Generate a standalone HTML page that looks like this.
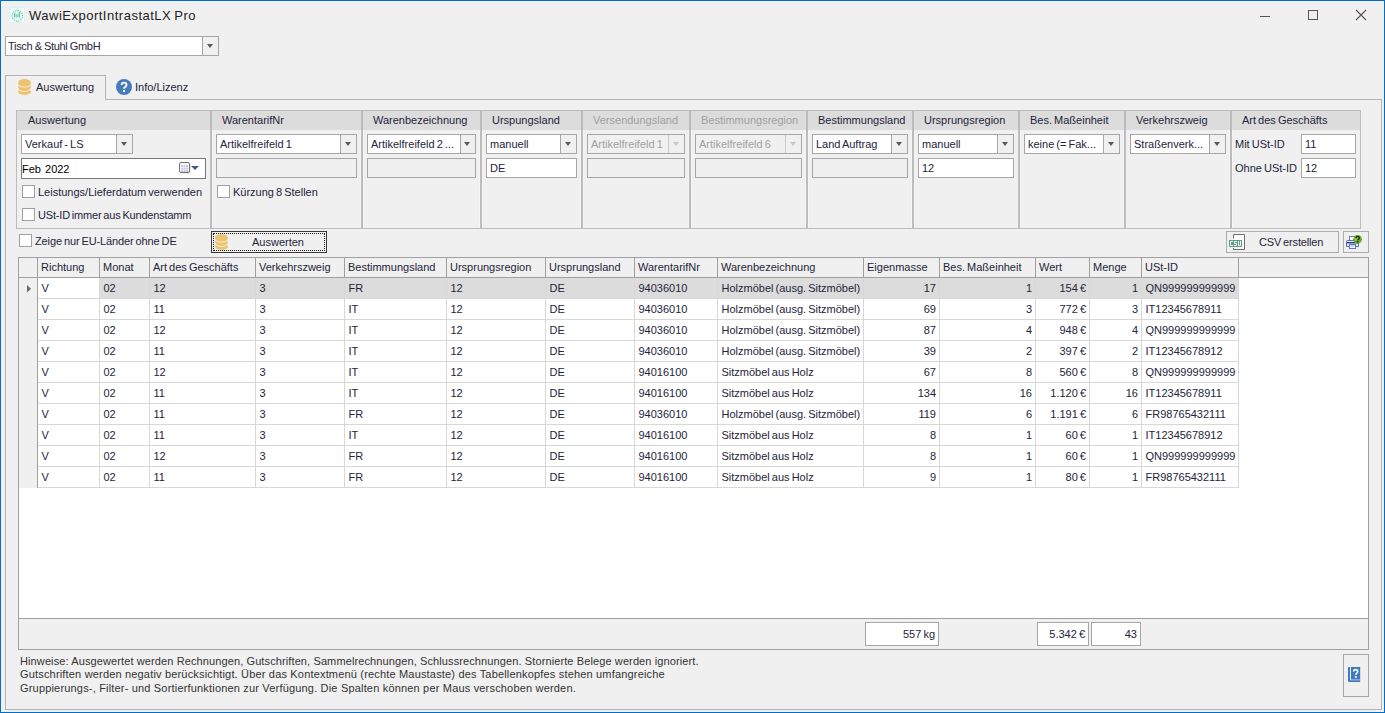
<!DOCTYPE html><html><head><meta charset="utf-8"><style>
html,body{margin:0;padding:0;}
body{width:1385px;height:713px;overflow:hidden;position:relative;background:#f0f0f0;font-family:"Liberation Sans", sans-serif;font-size:11px;color:#24243a;word-spacing:-1px;}
div{box-sizing:content-box;}
</style></head><body>
<div style="position:absolute;left:0px;top:0px;width:1383px;height:711px;border:1px solid #006dc9;"></div>
<svg style="position:absolute;left:9px;top:7px" width="16" height="16" viewBox="0 0 16 16">
<rect x="0.5" y="0.5" width="15" height="15" rx="1" fill="#f2fdfb" stroke="#d6f3ec"/>
<g fill="#5ccbb3">
<rect x="5" y="6" width="1.4" height="4.5"/><rect x="6.8" y="7.1" width="2.3" height="3.4" fill="#8adcc9"/><rect x="9.6" y="5" width="1.4" height="5.5"/>
<circle cx="9.22" cy="3.58" r="0.75"/><circle cx="11.39" cy="4.50" r="0.75"/><circle cx="12.95" cy="6.27" r="0.75"/><circle cx="13.59" cy="8.54" r="0.75"/><circle cx="13.18" cy="10.86" r="0.75"/><circle cx="11.81" cy="12.77" r="0.75"/><circle cx="9.74" cy="13.90" r="0.75"/><circle cx="7.38" cy="14.02" r="0.75"/><circle cx="5.21" cy="13.10" r="0.75"/><circle cx="3.65" cy="11.33" r="0.75"/><circle cx="3.01" cy="9.06" r="0.75"/><circle cx="3.42" cy="6.74" r="0.75"/><circle cx="4.79" cy="4.83" r="0.75"/><circle cx="6.86" cy="3.70" r="0.75"/>
</g></svg>
<div style="position:absolute;left:29px;top:8px;font-size:13px;line-height:15px;letter-spacing:0.5px;color:#222;white-space:nowrap">WawiExportIntrastatLX Pro</div>
<div style="position:absolute;left:1260px;top:16px;width:10px;height:1px;background:#555;"></div>
<div style="position:absolute;left:1308px;top:10px;width:8px;height:8px;border:1px solid #555;"></div>
<svg style="position:absolute;left:1355px;top:9px" width="12" height="12" viewBox="0 0 12 12"><path d="M1 1L11 11M11 1L1 11" stroke="#555" stroke-width="1.1"/></svg>
<div style="position:absolute;left:5px;top:36px;width:212px;height:18px;border:1px solid #a6a6a6;background:#fff;"></div>
<div style="position:absolute;left:202px;top:37px;width:1px;height:18px;background:#a6a6a6;"></div>
<div style="position:absolute;left:203px;top:37px;width:15px;height:18px;background:#f0f0f0;"></div>
<div style="position:absolute;left:8px;top:40px;line-height:13px;font-size:11px;color:#24243a;white-space:nowrap;letter-spacing:-0.3px;word-spacing:-0.5px;">Tisch &amp; Stuhl GmbH</div>
<div style="position:absolute;left:207px;top:44px;width:0;height:0;border-left:3.5px solid transparent;border-right:3.5px solid transparent;border-top:4px solid #5a5a5a;"></div>
<div style="position:absolute;left:5px;top:75px;width:99px;height:24px;border:1px solid #b4b4b4;border-bottom:none;background:#f0f0f0;"></div>
<div style="position:absolute;left:5px;top:99px;width:1375px;height:609px;border:1px solid #b4b4b4;"></div>
<div style="position:absolute;left:6px;top:99px;width:99px;height:1px;background:#f0f0f0;"></div>
<svg style="position:absolute;left:18px;top:79px" width="13" height="17" viewBox="0 0 14 17" preserveAspectRatio="none">
<ellipse cx="7" cy="12.5" rx="7" ry="3.5" fill="#ecc36f"/>
<ellipse cx="7" cy="8" rx="7" ry="3.5" fill="#ecc36f"/>
<path d="M0 10.5 Q7 14.5 14 10.5" stroke="#f6efe0" stroke-width="1" fill="none"/>
<ellipse cx="7" cy="4" rx="7" ry="4" fill="#ecc36f"/>
<path d="M0 6.3 Q7 10 14 6.3" stroke="#f6efe0" stroke-width="1" fill="none"/>
</svg>
<div style="position:absolute;left:36px;top:81px;line-height:13px;font-size:11px;color:#24243a;white-space:nowrap;">Auswertung</div>
<svg style="position:absolute;left:116px;top:79px" width="16" height="16" viewBox="0 0 16 16">
<circle cx="8" cy="8" r="8" fill="#447cbe"/>
<path d="M5.6 6.1 Q5.6 3.6 8 3.6 Q10.5 3.6 10.5 5.9 Q10.5 7.3 9 8.1 Q8.1 8.6 8.1 9.8" stroke="#fff" stroke-width="1.9" fill="none"/>
<rect x="7.1" y="11" width="2" height="2" fill="#fff"/>
</svg>
<div style="position:absolute;left:135px;top:81px;line-height:13px;font-size:11px;color:#24243a;white-space:nowrap;">Info/Lizenz</div>
<div style="position:absolute;left:16px;top:110px;width:1343px;height:117px;border:1px solid #bcbcbc;"></div>
<div style="position:absolute;left:17px;top:111px;width:1343px;height:19px;background:#dcdcdc;"></div>
<div style="position:absolute;left:210px;top:111px;width:2px;height:117px;background:#bcbcbc;"></div>
<div style="position:absolute;left:209px;top:130px;width:1px;height:98px;background:#f5f5f5;"></div>
<div style="position:absolute;left:212px;top:130px;width:1px;height:98px;background:#f5f5f5;"></div>
<div style="position:absolute;left:361px;top:111px;width:2px;height:117px;background:#bcbcbc;"></div>
<div style="position:absolute;left:360px;top:130px;width:1px;height:98px;background:#f5f5f5;"></div>
<div style="position:absolute;left:363px;top:130px;width:1px;height:98px;background:#f5f5f5;"></div>
<div style="position:absolute;left:480px;top:111px;width:2px;height:117px;background:#bcbcbc;"></div>
<div style="position:absolute;left:479px;top:130px;width:1px;height:98px;background:#f5f5f5;"></div>
<div style="position:absolute;left:482px;top:130px;width:1px;height:98px;background:#f5f5f5;"></div>
<div style="position:absolute;left:581px;top:111px;width:2px;height:117px;background:#bcbcbc;"></div>
<div style="position:absolute;left:580px;top:130px;width:1px;height:98px;background:#f5f5f5;"></div>
<div style="position:absolute;left:583px;top:130px;width:1px;height:98px;background:#f5f5f5;"></div>
<div style="position:absolute;left:689px;top:111px;width:2px;height:117px;background:#bcbcbc;"></div>
<div style="position:absolute;left:688px;top:130px;width:1px;height:98px;background:#f5f5f5;"></div>
<div style="position:absolute;left:691px;top:130px;width:1px;height:98px;background:#f5f5f5;"></div>
<div style="position:absolute;left:806px;top:111px;width:2px;height:117px;background:#bcbcbc;"></div>
<div style="position:absolute;left:805px;top:130px;width:1px;height:98px;background:#f5f5f5;"></div>
<div style="position:absolute;left:808px;top:130px;width:1px;height:98px;background:#f5f5f5;"></div>
<div style="position:absolute;left:912px;top:111px;width:2px;height:117px;background:#bcbcbc;"></div>
<div style="position:absolute;left:911px;top:130px;width:1px;height:98px;background:#f5f5f5;"></div>
<div style="position:absolute;left:914px;top:130px;width:1px;height:98px;background:#f5f5f5;"></div>
<div style="position:absolute;left:1018px;top:111px;width:2px;height:117px;background:#bcbcbc;"></div>
<div style="position:absolute;left:1017px;top:130px;width:1px;height:98px;background:#f5f5f5;"></div>
<div style="position:absolute;left:1020px;top:130px;width:1px;height:98px;background:#f5f5f5;"></div>
<div style="position:absolute;left:1124px;top:111px;width:2px;height:117px;background:#bcbcbc;"></div>
<div style="position:absolute;left:1123px;top:130px;width:1px;height:98px;background:#f5f5f5;"></div>
<div style="position:absolute;left:1126px;top:130px;width:1px;height:98px;background:#f5f5f5;"></div>
<div style="position:absolute;left:1230px;top:111px;width:2px;height:117px;background:#bcbcbc;"></div>
<div style="position:absolute;left:1229px;top:130px;width:1px;height:98px;background:#f5f5f5;"></div>
<div style="position:absolute;left:1232px;top:130px;width:1px;height:98px;background:#f5f5f5;"></div>
<div style="position:absolute;left:28px;top:114px;line-height:13px;font-size:11px;color:#24243a;white-space:nowrap;">Auswertung</div>
<div style="position:absolute;left:222px;top:114px;line-height:13px;font-size:11px;color:#24243a;white-space:nowrap;">WarentarifNr</div>
<div style="position:absolute;left:373px;top:114px;line-height:13px;font-size:11px;color:#24243a;white-space:nowrap;">Warenbezeichnung</div>
<div style="position:absolute;left:492px;top:114px;line-height:13px;font-size:11px;color:#24243a;white-space:nowrap;">Urspungsland</div>
<div style="position:absolute;left:593px;top:114px;line-height:13px;font-size:11px;color:#a0a0a0;white-space:nowrap;">Versendungsland</div>
<div style="position:absolute;left:701px;top:114px;line-height:13px;font-size:11px;color:#a0a0a0;white-space:nowrap;">Bestimmungsregion</div>
<div style="position:absolute;left:818px;top:114px;line-height:13px;font-size:11px;color:#24243a;white-space:nowrap;">Bestimmungsland</div>
<div style="position:absolute;left:924px;top:114px;line-height:13px;font-size:11px;color:#24243a;white-space:nowrap;">Ursprungsregion</div>
<div style="position:absolute;left:1030px;top:114px;line-height:13px;font-size:11px;color:#24243a;white-space:nowrap;">Bes. Maßeinheit</div>
<div style="position:absolute;left:1136px;top:114px;line-height:13px;font-size:11px;color:#24243a;white-space:nowrap;">Verkehrszweig</div>
<div style="position:absolute;left:1242px;top:114px;line-height:13px;font-size:11px;color:#24243a;white-space:nowrap;">Art des Geschäfts</div>
<div style="position:absolute;left:21px;top:134px;width:110px;height:18px;border:1px solid #a6a6a6;background:#fff;"></div>
<div style="position:absolute;left:116px;top:135px;width:1px;height:18px;background:#a6a6a6;"></div>
<div style="position:absolute;left:117px;top:135px;width:15px;height:18px;background:#f0f0f0;"></div>
<div style="position:absolute;left:25px;top:138px;line-height:13px;font-size:11px;color:#24243a;white-space:nowrap;">Verkauf - LS</div>
<div style="position:absolute;left:121px;top:142px;width:0;height:0;border-left:3.5px solid transparent;border-right:3.5px solid transparent;border-top:4px solid #5a5a5a;"></div>
<div style="position:absolute;left:21px;top:158px;width:183px;height:19px;border:1px solid #7a7a7a;background:#fff;"></div>
<div style="position:absolute;left:22px;top:163px;line-height:13px;font-size:11px;color:#000;white-space:nowrap;word-spacing:1px;">Feb 2022</div>
<svg style="position:absolute;left:179px;top:162px" width="12" height="12" viewBox="0 0 12 12">
<rect x="1.5" y="1.5" width="10" height="10" rx="1.5" fill="#d8d8d8"/>
<rect x="0.5" y="0.5" width="10" height="10" rx="1.5" fill="#fcfcfd" stroke="#7a6d68"/>
<g fill="#c3cbdc"><rect x="2" y="3" width="2" height="2"/><rect x="4.5" y="3" width="2" height="2"/><rect x="7" y="3" width="2" height="2"/>
<rect x="2" y="5.5" width="2" height="2"/><rect x="4.5" y="5.5" width="2" height="2"/><rect x="7" y="5.5" width="2" height="2"/>
<rect x="2" y="8" width="2" height="2"/><rect x="4.5" y="8" width="2" height="2"/><rect x="7" y="8" width="2" height="2"/></g>
</svg>
<div style="position:absolute;left:191px;top:166px;width:0;height:0;border-left:4.0px solid transparent;border-right:4.0px solid transparent;border-top:4px solid #3b5a8a;"></div>
<div style="position:absolute;left:22px;top:185px;width:11px;height:11px;border:1px solid #a0a0a0;background:#fff;"></div>
<div style="position:absolute;left:38px;top:186px;line-height:13px;font-size:11px;color:#24243a;white-space:nowrap;">Leistungs/Lieferdatum verwenden</div>
<div style="position:absolute;left:22px;top:208px;width:11px;height:11px;border:1px solid #a0a0a0;background:#fff;"></div>
<div style="position:absolute;left:38px;top:209px;line-height:13px;font-size:11px;color:#24243a;white-space:nowrap;letter-spacing:-0.18px;">USt-ID immer aus Kundenstamm</div>
<div style="position:absolute;left:216px;top:134px;width:139px;height:18px;border:1px solid #a6a6a6;background:#fff;"></div>
<div style="position:absolute;left:340px;top:135px;width:1px;height:18px;background:#a6a6a6;"></div>
<div style="position:absolute;left:341px;top:135px;width:15px;height:18px;background:#f0f0f0;"></div>
<div style="position:absolute;left:220px;top:138px;line-height:13px;font-size:11px;color:#24243a;white-space:nowrap;">Artikelfreifeld 1</div>
<div style="position:absolute;left:345px;top:142px;width:0;height:0;border-left:3.5px solid transparent;border-right:3.5px solid transparent;border-top:4px solid #5a5a5a;"></div>
<div style="position:absolute;left:216px;top:158px;width:139px;height:18px;border:1px solid #a6a6a6;background:#f0f0f0;"></div>
<div style="position:absolute;left:217px;top:185px;width:11px;height:11px;border:1px solid #a0a0a0;background:#fff;"></div>
<div style="position:absolute;left:233px;top:186px;line-height:13px;font-size:11px;color:#24243a;white-space:nowrap;">Kürzung 8 Stellen</div>
<div style="position:absolute;left:367px;top:134px;width:107px;height:18px;border:1px solid #a6a6a6;background:#fff;"></div>
<div style="position:absolute;left:460px;top:135px;width:1px;height:18px;background:#a6a6a6;"></div>
<div style="position:absolute;left:461px;top:135px;width:14px;height:18px;background:#f0f0f0;"></div>
<div style="position:absolute;left:371px;top:138px;line-height:13px;font-size:11px;color:#24243a;white-space:nowrap;">Artikelfreifeld 2 ...</div>
<div style="position:absolute;left:464px;top:142px;width:0;height:0;border-left:3.5px solid transparent;border-right:3.5px solid transparent;border-top:4px solid #5a5a5a;"></div>
<div style="position:absolute;left:367px;top:158px;width:107px;height:18px;border:1px solid #a6a6a6;background:#f0f0f0;"></div>
<div style="position:absolute;left:486px;top:134px;width:89px;height:18px;border:1px solid #a6a6a6;background:#fff;"></div>
<div style="position:absolute;left:560px;top:135px;width:1px;height:18px;background:#a6a6a6;"></div>
<div style="position:absolute;left:561px;top:135px;width:15px;height:18px;background:#f0f0f0;"></div>
<div style="position:absolute;left:490px;top:138px;line-height:13px;font-size:11px;color:#24243a;white-space:nowrap;">manuell</div>
<div style="position:absolute;left:565px;top:142px;width:0;height:0;border-left:3.5px solid transparent;border-right:3.5px solid transparent;border-top:4px solid #5a5a5a;"></div>
<div style="position:absolute;left:486px;top:158px;width:89px;height:18px;border:1px solid #a6a6a6;background:#fff;"></div>
<div style="position:absolute;left:490px;top:162px;line-height:13px;font-size:11px;color:#24243a;white-space:nowrap;">DE</div>
<div style="position:absolute;left:587px;top:134px;width:96px;height:18px;border:1px solid #a6a6a6;background:#f0f0f0;"></div>
<div style="position:absolute;left:668px;top:135px;width:1px;height:18px;background:#c8c8c8;"></div>
<div style="position:absolute;left:669px;top:135px;width:15px;height:18px;background:#f0f0f0;"></div>
<div style="position:absolute;left:591px;top:138px;line-height:13px;font-size:11px;color:#a0a0a0;white-space:nowrap;">Artikelfreifeld 1</div>
<div style="position:absolute;left:673px;top:142px;width:0;height:0;border-left:3.5px solid transparent;border-right:3.5px solid transparent;border-top:4px solid #c8c8c8;"></div>
<div style="position:absolute;left:587px;top:158px;width:96px;height:18px;border:1px solid #a6a6a6;background:#f0f0f0;"></div>
<div style="position:absolute;left:695px;top:134px;width:105px;height:18px;border:1px solid #a6a6a6;background:#f0f0f0;"></div>
<div style="position:absolute;left:785px;top:135px;width:1px;height:18px;background:#c8c8c8;"></div>
<div style="position:absolute;left:786px;top:135px;width:15px;height:18px;background:#f0f0f0;"></div>
<div style="position:absolute;left:699px;top:138px;line-height:13px;font-size:11px;color:#a0a0a0;white-space:nowrap;">Artikelfreifeld 6</div>
<div style="position:absolute;left:790px;top:142px;width:0;height:0;border-left:3.5px solid transparent;border-right:3.5px solid transparent;border-top:4px solid #c8c8c8;"></div>
<div style="position:absolute;left:695px;top:158px;width:105px;height:18px;border:1px solid #a6a6a6;background:#f0f0f0;"></div>
<div style="position:absolute;left:812px;top:134px;width:94px;height:18px;border:1px solid #a6a6a6;background:#fff;"></div>
<div style="position:absolute;left:891px;top:135px;width:1px;height:18px;background:#a6a6a6;"></div>
<div style="position:absolute;left:892px;top:135px;width:15px;height:18px;background:#f0f0f0;"></div>
<div style="position:absolute;left:816px;top:138px;line-height:13px;font-size:11px;color:#24243a;white-space:nowrap;">Land Auftrag</div>
<div style="position:absolute;left:896px;top:142px;width:0;height:0;border-left:3.5px solid transparent;border-right:3.5px solid transparent;border-top:4px solid #5a5a5a;"></div>
<div style="position:absolute;left:812px;top:158px;width:94px;height:18px;border:1px solid #a6a6a6;background:#f0f0f0;"></div>
<div style="position:absolute;left:918px;top:134px;width:94px;height:18px;border:1px solid #a6a6a6;background:#fff;"></div>
<div style="position:absolute;left:997px;top:135px;width:1px;height:18px;background:#a6a6a6;"></div>
<div style="position:absolute;left:998px;top:135px;width:15px;height:18px;background:#f0f0f0;"></div>
<div style="position:absolute;left:922px;top:138px;line-height:13px;font-size:11px;color:#24243a;white-space:nowrap;">manuell</div>
<div style="position:absolute;left:1002px;top:142px;width:0;height:0;border-left:3.5px solid transparent;border-right:3.5px solid transparent;border-top:4px solid #5a5a5a;"></div>
<div style="position:absolute;left:918px;top:158px;width:94px;height:18px;border:1px solid #a6a6a6;background:#fff;"></div>
<div style="position:absolute;left:922px;top:162px;line-height:13px;font-size:11px;color:#24243a;white-space:nowrap;">12</div>
<div style="position:absolute;left:1024px;top:134px;width:94px;height:18px;border:1px solid #a6a6a6;background:#fff;"></div>
<div style="position:absolute;left:1103px;top:135px;width:1px;height:18px;background:#a6a6a6;"></div>
<div style="position:absolute;left:1104px;top:135px;width:15px;height:18px;background:#f0f0f0;"></div>
<div style="position:absolute;left:1028px;top:138px;line-height:13px;font-size:11px;color:#24243a;white-space:nowrap;">keine (= Fak...</div>
<div style="position:absolute;left:1108px;top:142px;width:0;height:0;border-left:3.5px solid transparent;border-right:3.5px solid transparent;border-top:4px solid #5a5a5a;"></div>
<div style="position:absolute;left:1130px;top:134px;width:94px;height:18px;border:1px solid #a6a6a6;background:#fff;"></div>
<div style="position:absolute;left:1209px;top:135px;width:1px;height:18px;background:#a6a6a6;"></div>
<div style="position:absolute;left:1210px;top:135px;width:15px;height:18px;background:#f0f0f0;"></div>
<div style="position:absolute;left:1134px;top:138px;line-height:13px;font-size:11px;color:#24243a;white-space:nowrap;">Straßenverk...</div>
<div style="position:absolute;left:1214px;top:142px;width:0;height:0;border-left:3.5px solid transparent;border-right:3.5px solid transparent;border-top:4px solid #5a5a5a;"></div>
<div style="position:absolute;left:1235px;top:138px;line-height:13px;font-size:11px;color:#24243a;white-space:nowrap;">Mit USt-ID</div>
<div style="position:absolute;left:1301px;top:134px;width:53px;height:18px;border:1px solid #a6a6a6;background:#fff;"></div>
<div style="position:absolute;left:1305px;top:138px;line-height:13px;font-size:11px;color:#24243a;white-space:nowrap;">11</div>
<div style="position:absolute;left:1235px;top:162px;line-height:13px;font-size:11px;color:#24243a;white-space:nowrap;">Ohne USt-ID</div>
<div style="position:absolute;left:1301px;top:158px;width:53px;height:18px;border:1px solid #a6a6a6;background:#fff;"></div>
<div style="position:absolute;left:1305px;top:162px;line-height:13px;font-size:11px;color:#24243a;white-space:nowrap;">12</div>
<div style="position:absolute;left:19px;top:234px;width:11px;height:11px;border:1px solid #a0a0a0;background:#fff;"></div>
<div style="position:absolute;left:35px;top:235px;line-height:13px;font-size:11px;color:#24243a;white-space:nowrap;letter-spacing:-0.11px;">Zeige nur EU-Länder ohne DE</div>
<div style="position:absolute;left:211px;top:231px;width:114px;height:20px;border:1px solid #3a3a3a;background:#f0f0f0;"></div>
<div style="position:absolute;left:213px;top:233px;width:110px;height:16px;border:1px dotted #222;"></div>
<svg style="position:absolute;left:215px;top:234px" width="13" height="17" viewBox="0 0 14 17" preserveAspectRatio="none">
<ellipse cx="7" cy="12.5" rx="7" ry="3.5" fill="#ecc36f"/>
<ellipse cx="7" cy="8" rx="7" ry="3.5" fill="#ecc36f"/>
<path d="M0 10.5 Q7 14.5 14 10.5" stroke="#f6efe0" stroke-width="1" fill="none"/>
<ellipse cx="7" cy="4" rx="7" ry="4" fill="#ecc36f"/>
<path d="M0 6.3 Q7 10 14 6.3" stroke="#f6efe0" stroke-width="1" fill="none"/>
</svg>
<div style="position:absolute;left:252px;top:236px;line-height:13px;font-size:11px;color:#24243a;white-space:nowrap;">Auswerten</div>
<div style="position:absolute;left:1226px;top:231px;width:111px;height:20px;border:1px solid #adadad;background:#f0f0f0;"></div>
<svg style="position:absolute;left:1229px;top:234px" width="17" height="17" viewBox="0 0 17 17">
<rect x="4.5" y="0.5" width="11" height="15" fill="#fff"/>
<path d="M4.5 4.5V0.5H15.5V15.5H4.5V14" fill="none" stroke="#6f6f6f"/>
<rect x="0" y="6" width="13" height="7" fill="#5f9e86"/>
<path d="M4 7.5H1.5V11.5H4M8 7.5H5.5V9.5H7.5V11.5H5M9.5 7V11.5H11.5V7" fill="none" stroke="#fff" stroke-width="1"/>
</svg>
<div style="position:absolute;left:1259px;top:236px;line-height:13px;font-size:11px;color:#24243a;white-space:nowrap;letter-spacing:-0.15px;">CSV erstellen</div>
<div style="position:absolute;left:1343px;top:231px;width:24px;height:20px;border:1px solid #adadad;background:#f0f0f0;"></div>
<svg style="position:absolute;left:1345px;top:234px" width="18" height="16" viewBox="0 0 18 16">
<rect x="4.5" y="2.5" width="5" height="6" fill="#fff" stroke="#6a7fc0"/>
<path d="M1.5 7.5 Q1.5 6.5 2.5 6.5 H12.5 Q13.5 6.5 13.5 7.5 V12.5 H1.5Z" fill="#dfe8f4" stroke="#5a6fb5"/>
<rect x="2" y="8" width="11.5" height="1.4" fill="#2b3c78"/>
<rect x="4.5" y="10.5" width="6" height="4" fill="#fff" stroke="#6578bd"/>
<rect x="5.5" y="11.5" width="4" height="1" fill="#7ab8ea"/>
<circle cx="12.6" cy="5.3" r="4.3" fill="#66ad22"/>
<circle cx="12.2" cy="4.3" r="2.6" fill="#9ad04a" opacity="0.8"/>
<path d="M10.9 4.2 Q10.9 2.4 12.6 2.4 Q14.3 2.4 14.3 3.9 Q14.3 4.8 13.4 5.3 Q12.7 5.7 12.7 6.4" stroke="#10200a" stroke-width="1.3" fill="none"/>
<rect x="12" y="7.1" width="1.3" height="1.3" fill="#10200a"/>
</svg>
<div style="position:absolute;left:18px;top:257px;width:1349px;height:391px;border:1px solid #a0a0a0;background:#fff;"></div>
<div style="position:absolute;left:19px;top:258px;width:1349px;height:19px;background:#f0f0f0;"></div>
<div style="position:absolute;left:19px;top:277px;width:1349px;height:1px;background:#a0a0a0;"></div>
<div style="position:absolute;left:19px;top:278px;width:18px;height:210px;background:#f0f0f0;"></div>
<div style="position:absolute;left:37px;top:258px;width:1px;height:20px;background:#a0a0a0;"></div>
<div style="position:absolute;left:99px;top:258px;width:1px;height:20px;background:#a0a0a0;"></div>
<div style="position:absolute;left:149px;top:258px;width:1px;height:20px;background:#a0a0a0;"></div>
<div style="position:absolute;left:255px;top:258px;width:1px;height:20px;background:#a0a0a0;"></div>
<div style="position:absolute;left:344px;top:258px;width:1px;height:20px;background:#a0a0a0;"></div>
<div style="position:absolute;left:446px;top:258px;width:1px;height:20px;background:#a0a0a0;"></div>
<div style="position:absolute;left:545px;top:258px;width:1px;height:20px;background:#a0a0a0;"></div>
<div style="position:absolute;left:634px;top:258px;width:1px;height:20px;background:#a0a0a0;"></div>
<div style="position:absolute;left:717px;top:258px;width:1px;height:20px;background:#a0a0a0;"></div>
<div style="position:absolute;left:863px;top:258px;width:1px;height:20px;background:#a0a0a0;"></div>
<div style="position:absolute;left:939px;top:258px;width:1px;height:20px;background:#a0a0a0;"></div>
<div style="position:absolute;left:1035px;top:258px;width:1px;height:20px;background:#a0a0a0;"></div>
<div style="position:absolute;left:1089px;top:258px;width:1px;height:20px;background:#a0a0a0;"></div>
<div style="position:absolute;left:1141px;top:258px;width:1px;height:20px;background:#a0a0a0;"></div>
<div style="position:absolute;left:1238px;top:258px;width:1px;height:20px;background:#a0a0a0;"></div>
<div style="position:absolute;left:37px;top:278px;width:1px;height:210px;background:#a0a0a0;"></div>
<div style="position:absolute;left:41px;top:261px;line-height:13px;font-size:11px;color:#24243a;white-space:nowrap;">Richtung</div>
<div style="position:absolute;left:103px;top:261px;line-height:13px;font-size:11px;color:#24243a;white-space:nowrap;">Monat</div>
<div style="position:absolute;left:153px;top:261px;line-height:13px;font-size:11px;color:#24243a;white-space:nowrap;">Art des Geschäfts</div>
<div style="position:absolute;left:259px;top:261px;line-height:13px;font-size:11px;color:#24243a;white-space:nowrap;">Verkehrszweig</div>
<div style="position:absolute;left:348px;top:261px;line-height:13px;font-size:11px;color:#24243a;white-space:nowrap;">Bestimmungsland</div>
<div style="position:absolute;left:450px;top:261px;line-height:13px;font-size:11px;color:#24243a;white-space:nowrap;">Ursprungsregion</div>
<div style="position:absolute;left:549px;top:261px;line-height:13px;font-size:11px;color:#24243a;white-space:nowrap;">Ursprungsland</div>
<div style="position:absolute;left:638px;top:261px;line-height:13px;font-size:11px;color:#24243a;white-space:nowrap;">WarentarifNr</div>
<div style="position:absolute;left:721px;top:261px;line-height:13px;font-size:11px;color:#24243a;white-space:nowrap;">Warenbezeichnung</div>
<div style="position:absolute;left:867px;top:261px;line-height:13px;font-size:11px;color:#24243a;white-space:nowrap;">Eigenmasse</div>
<div style="position:absolute;left:943px;top:261px;line-height:13px;font-size:11px;color:#24243a;white-space:nowrap;">Bes. Maßeinheit</div>
<div style="position:absolute;left:1039px;top:261px;line-height:13px;font-size:11px;color:#24243a;white-space:nowrap;">Wert</div>
<div style="position:absolute;left:1093px;top:261px;line-height:13px;font-size:11px;color:#24243a;white-space:nowrap;">Menge</div>
<div style="position:absolute;left:1145px;top:261px;line-height:13px;font-size:11px;color:#24243a;white-space:nowrap;">USt-ID</div>
<div style="position:absolute;left:99px;top:278px;width:1139px;height:20px;background:#dcdcdc;"></div>
<div style="position:absolute;left:38px;top:298px;width:1200px;height:1px;background:#d8d8d8;"></div>
<div style="position:absolute;left:99px;top:278px;width:1px;height:20px;background:#d8d8d8;"></div>
<div style="position:absolute;left:149px;top:278px;width:1px;height:20px;background:#d8d8d8;"></div>
<div style="position:absolute;left:255px;top:278px;width:1px;height:20px;background:#d8d8d8;"></div>
<div style="position:absolute;left:344px;top:278px;width:1px;height:20px;background:#d8d8d8;"></div>
<div style="position:absolute;left:446px;top:278px;width:1px;height:20px;background:#d8d8d8;"></div>
<div style="position:absolute;left:545px;top:278px;width:1px;height:20px;background:#d8d8d8;"></div>
<div style="position:absolute;left:634px;top:278px;width:1px;height:20px;background:#d8d8d8;"></div>
<div style="position:absolute;left:717px;top:278px;width:1px;height:20px;background:#d8d8d8;"></div>
<div style="position:absolute;left:863px;top:278px;width:1px;height:20px;background:#d8d8d8;"></div>
<div style="position:absolute;left:939px;top:278px;width:1px;height:20px;background:#d8d8d8;"></div>
<div style="position:absolute;left:1035px;top:278px;width:1px;height:20px;background:#d8d8d8;"></div>
<div style="position:absolute;left:1089px;top:278px;width:1px;height:20px;background:#d8d8d8;"></div>
<div style="position:absolute;left:1141px;top:278px;width:1px;height:20px;background:#d8d8d8;"></div>
<div style="position:absolute;left:41.5px;top:282px;line-height:13px;font-size:11px;color:#24243a;white-space:nowrap;">V</div>
<div style="position:absolute;left:103.5px;top:282px;line-height:13px;font-size:11px;color:#24243a;white-space:nowrap;">02</div>
<div style="position:absolute;left:153.5px;top:282px;line-height:13px;font-size:11px;color:#24243a;white-space:nowrap;">12</div>
<div style="position:absolute;left:259.5px;top:282px;line-height:13px;font-size:11px;color:#24243a;white-space:nowrap;">3</div>
<div style="position:absolute;left:348.5px;top:282px;line-height:13px;font-size:11px;color:#24243a;white-space:nowrap;">FR</div>
<div style="position:absolute;left:450.5px;top:282px;line-height:13px;font-size:11px;color:#24243a;white-space:nowrap;">12</div>
<div style="position:absolute;left:549.5px;top:282px;line-height:13px;font-size:11px;color:#24243a;white-space:nowrap;">DE</div>
<div style="position:absolute;left:638.5px;top:282px;line-height:13px;font-size:11px;color:#24243a;white-space:nowrap;">94036010</div>
<div style="position:absolute;left:721.5px;top:282px;line-height:13px;font-size:11px;color:#24243a;white-space:nowrap;">Holzmöbel (ausg. Sitzmöbel)</div>
<div style="position:absolute;left:536px;width:400px;top:282px;line-height:13px;font-size:11px;color:#24243a;text-align:right;white-space:nowrap;">17</div>
<div style="position:absolute;left:632px;width:400px;top:282px;line-height:13px;font-size:11px;color:#24243a;text-align:right;white-space:nowrap;">1</div>
<div style="position:absolute;left:686px;width:400px;top:282px;line-height:13px;font-size:11px;color:#24243a;text-align:right;white-space:nowrap;">154 €</div>
<div style="position:absolute;left:738px;width:400px;top:282px;line-height:13px;font-size:11px;color:#24243a;text-align:right;white-space:nowrap;">1</div>
<div style="position:absolute;left:1145.5px;top:282px;line-height:13px;font-size:11px;color:#24243a;white-space:nowrap;">QN999999999999</div>
<div style="position:absolute;left:38px;top:319px;width:1200px;height:1px;background:#d8d8d8;"></div>
<div style="position:absolute;left:99px;top:299px;width:1px;height:20px;background:#d8d8d8;"></div>
<div style="position:absolute;left:149px;top:299px;width:1px;height:20px;background:#d8d8d8;"></div>
<div style="position:absolute;left:255px;top:299px;width:1px;height:20px;background:#d8d8d8;"></div>
<div style="position:absolute;left:344px;top:299px;width:1px;height:20px;background:#d8d8d8;"></div>
<div style="position:absolute;left:446px;top:299px;width:1px;height:20px;background:#d8d8d8;"></div>
<div style="position:absolute;left:545px;top:299px;width:1px;height:20px;background:#d8d8d8;"></div>
<div style="position:absolute;left:634px;top:299px;width:1px;height:20px;background:#d8d8d8;"></div>
<div style="position:absolute;left:717px;top:299px;width:1px;height:20px;background:#d8d8d8;"></div>
<div style="position:absolute;left:863px;top:299px;width:1px;height:20px;background:#d8d8d8;"></div>
<div style="position:absolute;left:939px;top:299px;width:1px;height:20px;background:#d8d8d8;"></div>
<div style="position:absolute;left:1035px;top:299px;width:1px;height:20px;background:#d8d8d8;"></div>
<div style="position:absolute;left:1089px;top:299px;width:1px;height:20px;background:#d8d8d8;"></div>
<div style="position:absolute;left:1141px;top:299px;width:1px;height:20px;background:#d8d8d8;"></div>
<div style="position:absolute;left:41.5px;top:303px;line-height:13px;font-size:11px;color:#24243a;white-space:nowrap;">V</div>
<div style="position:absolute;left:103.5px;top:303px;line-height:13px;font-size:11px;color:#24243a;white-space:nowrap;">02</div>
<div style="position:absolute;left:153.5px;top:303px;line-height:13px;font-size:11px;color:#24243a;white-space:nowrap;">11</div>
<div style="position:absolute;left:259.5px;top:303px;line-height:13px;font-size:11px;color:#24243a;white-space:nowrap;">3</div>
<div style="position:absolute;left:348.5px;top:303px;line-height:13px;font-size:11px;color:#24243a;white-space:nowrap;">IT</div>
<div style="position:absolute;left:450.5px;top:303px;line-height:13px;font-size:11px;color:#24243a;white-space:nowrap;">12</div>
<div style="position:absolute;left:549.5px;top:303px;line-height:13px;font-size:11px;color:#24243a;white-space:nowrap;">DE</div>
<div style="position:absolute;left:638.5px;top:303px;line-height:13px;font-size:11px;color:#24243a;white-space:nowrap;">94036010</div>
<div style="position:absolute;left:721.5px;top:303px;line-height:13px;font-size:11px;color:#24243a;white-space:nowrap;">Holzmöbel (ausg. Sitzmöbel)</div>
<div style="position:absolute;left:536px;width:400px;top:303px;line-height:13px;font-size:11px;color:#24243a;text-align:right;white-space:nowrap;">69</div>
<div style="position:absolute;left:632px;width:400px;top:303px;line-height:13px;font-size:11px;color:#24243a;text-align:right;white-space:nowrap;">3</div>
<div style="position:absolute;left:686px;width:400px;top:303px;line-height:13px;font-size:11px;color:#24243a;text-align:right;white-space:nowrap;">772 €</div>
<div style="position:absolute;left:738px;width:400px;top:303px;line-height:13px;font-size:11px;color:#24243a;text-align:right;white-space:nowrap;">3</div>
<div style="position:absolute;left:1145.5px;top:303px;line-height:13px;font-size:11px;color:#24243a;white-space:nowrap;">IT12345678911</div>
<div style="position:absolute;left:38px;top:340px;width:1200px;height:1px;background:#d8d8d8;"></div>
<div style="position:absolute;left:99px;top:320px;width:1px;height:20px;background:#d8d8d8;"></div>
<div style="position:absolute;left:149px;top:320px;width:1px;height:20px;background:#d8d8d8;"></div>
<div style="position:absolute;left:255px;top:320px;width:1px;height:20px;background:#d8d8d8;"></div>
<div style="position:absolute;left:344px;top:320px;width:1px;height:20px;background:#d8d8d8;"></div>
<div style="position:absolute;left:446px;top:320px;width:1px;height:20px;background:#d8d8d8;"></div>
<div style="position:absolute;left:545px;top:320px;width:1px;height:20px;background:#d8d8d8;"></div>
<div style="position:absolute;left:634px;top:320px;width:1px;height:20px;background:#d8d8d8;"></div>
<div style="position:absolute;left:717px;top:320px;width:1px;height:20px;background:#d8d8d8;"></div>
<div style="position:absolute;left:863px;top:320px;width:1px;height:20px;background:#d8d8d8;"></div>
<div style="position:absolute;left:939px;top:320px;width:1px;height:20px;background:#d8d8d8;"></div>
<div style="position:absolute;left:1035px;top:320px;width:1px;height:20px;background:#d8d8d8;"></div>
<div style="position:absolute;left:1089px;top:320px;width:1px;height:20px;background:#d8d8d8;"></div>
<div style="position:absolute;left:1141px;top:320px;width:1px;height:20px;background:#d8d8d8;"></div>
<div style="position:absolute;left:41.5px;top:324px;line-height:13px;font-size:11px;color:#24243a;white-space:nowrap;">V</div>
<div style="position:absolute;left:103.5px;top:324px;line-height:13px;font-size:11px;color:#24243a;white-space:nowrap;">02</div>
<div style="position:absolute;left:153.5px;top:324px;line-height:13px;font-size:11px;color:#24243a;white-space:nowrap;">12</div>
<div style="position:absolute;left:259.5px;top:324px;line-height:13px;font-size:11px;color:#24243a;white-space:nowrap;">3</div>
<div style="position:absolute;left:348.5px;top:324px;line-height:13px;font-size:11px;color:#24243a;white-space:nowrap;">IT</div>
<div style="position:absolute;left:450.5px;top:324px;line-height:13px;font-size:11px;color:#24243a;white-space:nowrap;">12</div>
<div style="position:absolute;left:549.5px;top:324px;line-height:13px;font-size:11px;color:#24243a;white-space:nowrap;">DE</div>
<div style="position:absolute;left:638.5px;top:324px;line-height:13px;font-size:11px;color:#24243a;white-space:nowrap;">94036010</div>
<div style="position:absolute;left:721.5px;top:324px;line-height:13px;font-size:11px;color:#24243a;white-space:nowrap;">Holzmöbel (ausg. Sitzmöbel)</div>
<div style="position:absolute;left:536px;width:400px;top:324px;line-height:13px;font-size:11px;color:#24243a;text-align:right;white-space:nowrap;">87</div>
<div style="position:absolute;left:632px;width:400px;top:324px;line-height:13px;font-size:11px;color:#24243a;text-align:right;white-space:nowrap;">4</div>
<div style="position:absolute;left:686px;width:400px;top:324px;line-height:13px;font-size:11px;color:#24243a;text-align:right;white-space:nowrap;">948 €</div>
<div style="position:absolute;left:738px;width:400px;top:324px;line-height:13px;font-size:11px;color:#24243a;text-align:right;white-space:nowrap;">4</div>
<div style="position:absolute;left:1145.5px;top:324px;line-height:13px;font-size:11px;color:#24243a;white-space:nowrap;">QN999999999999</div>
<div style="position:absolute;left:38px;top:361px;width:1200px;height:1px;background:#d8d8d8;"></div>
<div style="position:absolute;left:99px;top:341px;width:1px;height:20px;background:#d8d8d8;"></div>
<div style="position:absolute;left:149px;top:341px;width:1px;height:20px;background:#d8d8d8;"></div>
<div style="position:absolute;left:255px;top:341px;width:1px;height:20px;background:#d8d8d8;"></div>
<div style="position:absolute;left:344px;top:341px;width:1px;height:20px;background:#d8d8d8;"></div>
<div style="position:absolute;left:446px;top:341px;width:1px;height:20px;background:#d8d8d8;"></div>
<div style="position:absolute;left:545px;top:341px;width:1px;height:20px;background:#d8d8d8;"></div>
<div style="position:absolute;left:634px;top:341px;width:1px;height:20px;background:#d8d8d8;"></div>
<div style="position:absolute;left:717px;top:341px;width:1px;height:20px;background:#d8d8d8;"></div>
<div style="position:absolute;left:863px;top:341px;width:1px;height:20px;background:#d8d8d8;"></div>
<div style="position:absolute;left:939px;top:341px;width:1px;height:20px;background:#d8d8d8;"></div>
<div style="position:absolute;left:1035px;top:341px;width:1px;height:20px;background:#d8d8d8;"></div>
<div style="position:absolute;left:1089px;top:341px;width:1px;height:20px;background:#d8d8d8;"></div>
<div style="position:absolute;left:1141px;top:341px;width:1px;height:20px;background:#d8d8d8;"></div>
<div style="position:absolute;left:41.5px;top:345px;line-height:13px;font-size:11px;color:#24243a;white-space:nowrap;">V</div>
<div style="position:absolute;left:103.5px;top:345px;line-height:13px;font-size:11px;color:#24243a;white-space:nowrap;">02</div>
<div style="position:absolute;left:153.5px;top:345px;line-height:13px;font-size:11px;color:#24243a;white-space:nowrap;">11</div>
<div style="position:absolute;left:259.5px;top:345px;line-height:13px;font-size:11px;color:#24243a;white-space:nowrap;">3</div>
<div style="position:absolute;left:348.5px;top:345px;line-height:13px;font-size:11px;color:#24243a;white-space:nowrap;">IT</div>
<div style="position:absolute;left:450.5px;top:345px;line-height:13px;font-size:11px;color:#24243a;white-space:nowrap;">12</div>
<div style="position:absolute;left:549.5px;top:345px;line-height:13px;font-size:11px;color:#24243a;white-space:nowrap;">DE</div>
<div style="position:absolute;left:638.5px;top:345px;line-height:13px;font-size:11px;color:#24243a;white-space:nowrap;">94036010</div>
<div style="position:absolute;left:721.5px;top:345px;line-height:13px;font-size:11px;color:#24243a;white-space:nowrap;">Holzmöbel (ausg. Sitzmöbel)</div>
<div style="position:absolute;left:536px;width:400px;top:345px;line-height:13px;font-size:11px;color:#24243a;text-align:right;white-space:nowrap;">39</div>
<div style="position:absolute;left:632px;width:400px;top:345px;line-height:13px;font-size:11px;color:#24243a;text-align:right;white-space:nowrap;">2</div>
<div style="position:absolute;left:686px;width:400px;top:345px;line-height:13px;font-size:11px;color:#24243a;text-align:right;white-space:nowrap;">397 €</div>
<div style="position:absolute;left:738px;width:400px;top:345px;line-height:13px;font-size:11px;color:#24243a;text-align:right;white-space:nowrap;">2</div>
<div style="position:absolute;left:1145.5px;top:345px;line-height:13px;font-size:11px;color:#24243a;white-space:nowrap;">IT12345678912</div>
<div style="position:absolute;left:38px;top:382px;width:1200px;height:1px;background:#d8d8d8;"></div>
<div style="position:absolute;left:99px;top:362px;width:1px;height:20px;background:#d8d8d8;"></div>
<div style="position:absolute;left:149px;top:362px;width:1px;height:20px;background:#d8d8d8;"></div>
<div style="position:absolute;left:255px;top:362px;width:1px;height:20px;background:#d8d8d8;"></div>
<div style="position:absolute;left:344px;top:362px;width:1px;height:20px;background:#d8d8d8;"></div>
<div style="position:absolute;left:446px;top:362px;width:1px;height:20px;background:#d8d8d8;"></div>
<div style="position:absolute;left:545px;top:362px;width:1px;height:20px;background:#d8d8d8;"></div>
<div style="position:absolute;left:634px;top:362px;width:1px;height:20px;background:#d8d8d8;"></div>
<div style="position:absolute;left:717px;top:362px;width:1px;height:20px;background:#d8d8d8;"></div>
<div style="position:absolute;left:863px;top:362px;width:1px;height:20px;background:#d8d8d8;"></div>
<div style="position:absolute;left:939px;top:362px;width:1px;height:20px;background:#d8d8d8;"></div>
<div style="position:absolute;left:1035px;top:362px;width:1px;height:20px;background:#d8d8d8;"></div>
<div style="position:absolute;left:1089px;top:362px;width:1px;height:20px;background:#d8d8d8;"></div>
<div style="position:absolute;left:1141px;top:362px;width:1px;height:20px;background:#d8d8d8;"></div>
<div style="position:absolute;left:41.5px;top:366px;line-height:13px;font-size:11px;color:#24243a;white-space:nowrap;">V</div>
<div style="position:absolute;left:103.5px;top:366px;line-height:13px;font-size:11px;color:#24243a;white-space:nowrap;">02</div>
<div style="position:absolute;left:153.5px;top:366px;line-height:13px;font-size:11px;color:#24243a;white-space:nowrap;">12</div>
<div style="position:absolute;left:259.5px;top:366px;line-height:13px;font-size:11px;color:#24243a;white-space:nowrap;">3</div>
<div style="position:absolute;left:348.5px;top:366px;line-height:13px;font-size:11px;color:#24243a;white-space:nowrap;">IT</div>
<div style="position:absolute;left:450.5px;top:366px;line-height:13px;font-size:11px;color:#24243a;white-space:nowrap;">12</div>
<div style="position:absolute;left:549.5px;top:366px;line-height:13px;font-size:11px;color:#24243a;white-space:nowrap;">DE</div>
<div style="position:absolute;left:638.5px;top:366px;line-height:13px;font-size:11px;color:#24243a;white-space:nowrap;">94016100</div>
<div style="position:absolute;left:721.5px;top:366px;line-height:13px;font-size:11px;color:#24243a;white-space:nowrap;">Sitzmöbel aus Holz</div>
<div style="position:absolute;left:536px;width:400px;top:366px;line-height:13px;font-size:11px;color:#24243a;text-align:right;white-space:nowrap;">67</div>
<div style="position:absolute;left:632px;width:400px;top:366px;line-height:13px;font-size:11px;color:#24243a;text-align:right;white-space:nowrap;">8</div>
<div style="position:absolute;left:686px;width:400px;top:366px;line-height:13px;font-size:11px;color:#24243a;text-align:right;white-space:nowrap;">560 €</div>
<div style="position:absolute;left:738px;width:400px;top:366px;line-height:13px;font-size:11px;color:#24243a;text-align:right;white-space:nowrap;">8</div>
<div style="position:absolute;left:1145.5px;top:366px;line-height:13px;font-size:11px;color:#24243a;white-space:nowrap;">QN999999999999</div>
<div style="position:absolute;left:38px;top:403px;width:1200px;height:1px;background:#d8d8d8;"></div>
<div style="position:absolute;left:99px;top:383px;width:1px;height:20px;background:#d8d8d8;"></div>
<div style="position:absolute;left:149px;top:383px;width:1px;height:20px;background:#d8d8d8;"></div>
<div style="position:absolute;left:255px;top:383px;width:1px;height:20px;background:#d8d8d8;"></div>
<div style="position:absolute;left:344px;top:383px;width:1px;height:20px;background:#d8d8d8;"></div>
<div style="position:absolute;left:446px;top:383px;width:1px;height:20px;background:#d8d8d8;"></div>
<div style="position:absolute;left:545px;top:383px;width:1px;height:20px;background:#d8d8d8;"></div>
<div style="position:absolute;left:634px;top:383px;width:1px;height:20px;background:#d8d8d8;"></div>
<div style="position:absolute;left:717px;top:383px;width:1px;height:20px;background:#d8d8d8;"></div>
<div style="position:absolute;left:863px;top:383px;width:1px;height:20px;background:#d8d8d8;"></div>
<div style="position:absolute;left:939px;top:383px;width:1px;height:20px;background:#d8d8d8;"></div>
<div style="position:absolute;left:1035px;top:383px;width:1px;height:20px;background:#d8d8d8;"></div>
<div style="position:absolute;left:1089px;top:383px;width:1px;height:20px;background:#d8d8d8;"></div>
<div style="position:absolute;left:1141px;top:383px;width:1px;height:20px;background:#d8d8d8;"></div>
<div style="position:absolute;left:41.5px;top:387px;line-height:13px;font-size:11px;color:#24243a;white-space:nowrap;">V</div>
<div style="position:absolute;left:103.5px;top:387px;line-height:13px;font-size:11px;color:#24243a;white-space:nowrap;">02</div>
<div style="position:absolute;left:153.5px;top:387px;line-height:13px;font-size:11px;color:#24243a;white-space:nowrap;">11</div>
<div style="position:absolute;left:259.5px;top:387px;line-height:13px;font-size:11px;color:#24243a;white-space:nowrap;">3</div>
<div style="position:absolute;left:348.5px;top:387px;line-height:13px;font-size:11px;color:#24243a;white-space:nowrap;">IT</div>
<div style="position:absolute;left:450.5px;top:387px;line-height:13px;font-size:11px;color:#24243a;white-space:nowrap;">12</div>
<div style="position:absolute;left:549.5px;top:387px;line-height:13px;font-size:11px;color:#24243a;white-space:nowrap;">DE</div>
<div style="position:absolute;left:638.5px;top:387px;line-height:13px;font-size:11px;color:#24243a;white-space:nowrap;">94016100</div>
<div style="position:absolute;left:721.5px;top:387px;line-height:13px;font-size:11px;color:#24243a;white-space:nowrap;">Sitzmöbel aus Holz</div>
<div style="position:absolute;left:536px;width:400px;top:387px;line-height:13px;font-size:11px;color:#24243a;text-align:right;white-space:nowrap;">134</div>
<div style="position:absolute;left:632px;width:400px;top:387px;line-height:13px;font-size:11px;color:#24243a;text-align:right;white-space:nowrap;">16</div>
<div style="position:absolute;left:686px;width:400px;top:387px;line-height:13px;font-size:11px;color:#24243a;text-align:right;white-space:nowrap;">1.120 €</div>
<div style="position:absolute;left:738px;width:400px;top:387px;line-height:13px;font-size:11px;color:#24243a;text-align:right;white-space:nowrap;">16</div>
<div style="position:absolute;left:1145.5px;top:387px;line-height:13px;font-size:11px;color:#24243a;white-space:nowrap;">IT12345678911</div>
<div style="position:absolute;left:38px;top:424px;width:1200px;height:1px;background:#d8d8d8;"></div>
<div style="position:absolute;left:99px;top:404px;width:1px;height:20px;background:#d8d8d8;"></div>
<div style="position:absolute;left:149px;top:404px;width:1px;height:20px;background:#d8d8d8;"></div>
<div style="position:absolute;left:255px;top:404px;width:1px;height:20px;background:#d8d8d8;"></div>
<div style="position:absolute;left:344px;top:404px;width:1px;height:20px;background:#d8d8d8;"></div>
<div style="position:absolute;left:446px;top:404px;width:1px;height:20px;background:#d8d8d8;"></div>
<div style="position:absolute;left:545px;top:404px;width:1px;height:20px;background:#d8d8d8;"></div>
<div style="position:absolute;left:634px;top:404px;width:1px;height:20px;background:#d8d8d8;"></div>
<div style="position:absolute;left:717px;top:404px;width:1px;height:20px;background:#d8d8d8;"></div>
<div style="position:absolute;left:863px;top:404px;width:1px;height:20px;background:#d8d8d8;"></div>
<div style="position:absolute;left:939px;top:404px;width:1px;height:20px;background:#d8d8d8;"></div>
<div style="position:absolute;left:1035px;top:404px;width:1px;height:20px;background:#d8d8d8;"></div>
<div style="position:absolute;left:1089px;top:404px;width:1px;height:20px;background:#d8d8d8;"></div>
<div style="position:absolute;left:1141px;top:404px;width:1px;height:20px;background:#d8d8d8;"></div>
<div style="position:absolute;left:41.5px;top:408px;line-height:13px;font-size:11px;color:#24243a;white-space:nowrap;">V</div>
<div style="position:absolute;left:103.5px;top:408px;line-height:13px;font-size:11px;color:#24243a;white-space:nowrap;">02</div>
<div style="position:absolute;left:153.5px;top:408px;line-height:13px;font-size:11px;color:#24243a;white-space:nowrap;">11</div>
<div style="position:absolute;left:259.5px;top:408px;line-height:13px;font-size:11px;color:#24243a;white-space:nowrap;">3</div>
<div style="position:absolute;left:348.5px;top:408px;line-height:13px;font-size:11px;color:#24243a;white-space:nowrap;">FR</div>
<div style="position:absolute;left:450.5px;top:408px;line-height:13px;font-size:11px;color:#24243a;white-space:nowrap;">12</div>
<div style="position:absolute;left:549.5px;top:408px;line-height:13px;font-size:11px;color:#24243a;white-space:nowrap;">DE</div>
<div style="position:absolute;left:638.5px;top:408px;line-height:13px;font-size:11px;color:#24243a;white-space:nowrap;">94036010</div>
<div style="position:absolute;left:721.5px;top:408px;line-height:13px;font-size:11px;color:#24243a;white-space:nowrap;">Holzmöbel (ausg. Sitzmöbel)</div>
<div style="position:absolute;left:536px;width:400px;top:408px;line-height:13px;font-size:11px;color:#24243a;text-align:right;white-space:nowrap;">119</div>
<div style="position:absolute;left:632px;width:400px;top:408px;line-height:13px;font-size:11px;color:#24243a;text-align:right;white-space:nowrap;">6</div>
<div style="position:absolute;left:686px;width:400px;top:408px;line-height:13px;font-size:11px;color:#24243a;text-align:right;white-space:nowrap;">1.191 €</div>
<div style="position:absolute;left:738px;width:400px;top:408px;line-height:13px;font-size:11px;color:#24243a;text-align:right;white-space:nowrap;">6</div>
<div style="position:absolute;left:1145.5px;top:408px;line-height:13px;font-size:11px;color:#24243a;white-space:nowrap;">FR98765432111</div>
<div style="position:absolute;left:38px;top:445px;width:1200px;height:1px;background:#d8d8d8;"></div>
<div style="position:absolute;left:99px;top:425px;width:1px;height:20px;background:#d8d8d8;"></div>
<div style="position:absolute;left:149px;top:425px;width:1px;height:20px;background:#d8d8d8;"></div>
<div style="position:absolute;left:255px;top:425px;width:1px;height:20px;background:#d8d8d8;"></div>
<div style="position:absolute;left:344px;top:425px;width:1px;height:20px;background:#d8d8d8;"></div>
<div style="position:absolute;left:446px;top:425px;width:1px;height:20px;background:#d8d8d8;"></div>
<div style="position:absolute;left:545px;top:425px;width:1px;height:20px;background:#d8d8d8;"></div>
<div style="position:absolute;left:634px;top:425px;width:1px;height:20px;background:#d8d8d8;"></div>
<div style="position:absolute;left:717px;top:425px;width:1px;height:20px;background:#d8d8d8;"></div>
<div style="position:absolute;left:863px;top:425px;width:1px;height:20px;background:#d8d8d8;"></div>
<div style="position:absolute;left:939px;top:425px;width:1px;height:20px;background:#d8d8d8;"></div>
<div style="position:absolute;left:1035px;top:425px;width:1px;height:20px;background:#d8d8d8;"></div>
<div style="position:absolute;left:1089px;top:425px;width:1px;height:20px;background:#d8d8d8;"></div>
<div style="position:absolute;left:1141px;top:425px;width:1px;height:20px;background:#d8d8d8;"></div>
<div style="position:absolute;left:41.5px;top:429px;line-height:13px;font-size:11px;color:#24243a;white-space:nowrap;">V</div>
<div style="position:absolute;left:103.5px;top:429px;line-height:13px;font-size:11px;color:#24243a;white-space:nowrap;">02</div>
<div style="position:absolute;left:153.5px;top:429px;line-height:13px;font-size:11px;color:#24243a;white-space:nowrap;">11</div>
<div style="position:absolute;left:259.5px;top:429px;line-height:13px;font-size:11px;color:#24243a;white-space:nowrap;">3</div>
<div style="position:absolute;left:348.5px;top:429px;line-height:13px;font-size:11px;color:#24243a;white-space:nowrap;">IT</div>
<div style="position:absolute;left:450.5px;top:429px;line-height:13px;font-size:11px;color:#24243a;white-space:nowrap;">12</div>
<div style="position:absolute;left:549.5px;top:429px;line-height:13px;font-size:11px;color:#24243a;white-space:nowrap;">DE</div>
<div style="position:absolute;left:638.5px;top:429px;line-height:13px;font-size:11px;color:#24243a;white-space:nowrap;">94016100</div>
<div style="position:absolute;left:721.5px;top:429px;line-height:13px;font-size:11px;color:#24243a;white-space:nowrap;">Sitzmöbel aus Holz</div>
<div style="position:absolute;left:536px;width:400px;top:429px;line-height:13px;font-size:11px;color:#24243a;text-align:right;white-space:nowrap;">8</div>
<div style="position:absolute;left:632px;width:400px;top:429px;line-height:13px;font-size:11px;color:#24243a;text-align:right;white-space:nowrap;">1</div>
<div style="position:absolute;left:686px;width:400px;top:429px;line-height:13px;font-size:11px;color:#24243a;text-align:right;white-space:nowrap;">60 €</div>
<div style="position:absolute;left:738px;width:400px;top:429px;line-height:13px;font-size:11px;color:#24243a;text-align:right;white-space:nowrap;">1</div>
<div style="position:absolute;left:1145.5px;top:429px;line-height:13px;font-size:11px;color:#24243a;white-space:nowrap;">IT12345678912</div>
<div style="position:absolute;left:38px;top:466px;width:1200px;height:1px;background:#d8d8d8;"></div>
<div style="position:absolute;left:99px;top:446px;width:1px;height:20px;background:#d8d8d8;"></div>
<div style="position:absolute;left:149px;top:446px;width:1px;height:20px;background:#d8d8d8;"></div>
<div style="position:absolute;left:255px;top:446px;width:1px;height:20px;background:#d8d8d8;"></div>
<div style="position:absolute;left:344px;top:446px;width:1px;height:20px;background:#d8d8d8;"></div>
<div style="position:absolute;left:446px;top:446px;width:1px;height:20px;background:#d8d8d8;"></div>
<div style="position:absolute;left:545px;top:446px;width:1px;height:20px;background:#d8d8d8;"></div>
<div style="position:absolute;left:634px;top:446px;width:1px;height:20px;background:#d8d8d8;"></div>
<div style="position:absolute;left:717px;top:446px;width:1px;height:20px;background:#d8d8d8;"></div>
<div style="position:absolute;left:863px;top:446px;width:1px;height:20px;background:#d8d8d8;"></div>
<div style="position:absolute;left:939px;top:446px;width:1px;height:20px;background:#d8d8d8;"></div>
<div style="position:absolute;left:1035px;top:446px;width:1px;height:20px;background:#d8d8d8;"></div>
<div style="position:absolute;left:1089px;top:446px;width:1px;height:20px;background:#d8d8d8;"></div>
<div style="position:absolute;left:1141px;top:446px;width:1px;height:20px;background:#d8d8d8;"></div>
<div style="position:absolute;left:41.5px;top:450px;line-height:13px;font-size:11px;color:#24243a;white-space:nowrap;">V</div>
<div style="position:absolute;left:103.5px;top:450px;line-height:13px;font-size:11px;color:#24243a;white-space:nowrap;">02</div>
<div style="position:absolute;left:153.5px;top:450px;line-height:13px;font-size:11px;color:#24243a;white-space:nowrap;">12</div>
<div style="position:absolute;left:259.5px;top:450px;line-height:13px;font-size:11px;color:#24243a;white-space:nowrap;">3</div>
<div style="position:absolute;left:348.5px;top:450px;line-height:13px;font-size:11px;color:#24243a;white-space:nowrap;">FR</div>
<div style="position:absolute;left:450.5px;top:450px;line-height:13px;font-size:11px;color:#24243a;white-space:nowrap;">12</div>
<div style="position:absolute;left:549.5px;top:450px;line-height:13px;font-size:11px;color:#24243a;white-space:nowrap;">DE</div>
<div style="position:absolute;left:638.5px;top:450px;line-height:13px;font-size:11px;color:#24243a;white-space:nowrap;">94016100</div>
<div style="position:absolute;left:721.5px;top:450px;line-height:13px;font-size:11px;color:#24243a;white-space:nowrap;">Sitzmöbel aus Holz</div>
<div style="position:absolute;left:536px;width:400px;top:450px;line-height:13px;font-size:11px;color:#24243a;text-align:right;white-space:nowrap;">8</div>
<div style="position:absolute;left:632px;width:400px;top:450px;line-height:13px;font-size:11px;color:#24243a;text-align:right;white-space:nowrap;">1</div>
<div style="position:absolute;left:686px;width:400px;top:450px;line-height:13px;font-size:11px;color:#24243a;text-align:right;white-space:nowrap;">60 €</div>
<div style="position:absolute;left:738px;width:400px;top:450px;line-height:13px;font-size:11px;color:#24243a;text-align:right;white-space:nowrap;">1</div>
<div style="position:absolute;left:1145.5px;top:450px;line-height:13px;font-size:11px;color:#24243a;white-space:nowrap;">QN999999999999</div>
<div style="position:absolute;left:38px;top:487px;width:1200px;height:1px;background:#d8d8d8;"></div>
<div style="position:absolute;left:99px;top:467px;width:1px;height:20px;background:#d8d8d8;"></div>
<div style="position:absolute;left:149px;top:467px;width:1px;height:20px;background:#d8d8d8;"></div>
<div style="position:absolute;left:255px;top:467px;width:1px;height:20px;background:#d8d8d8;"></div>
<div style="position:absolute;left:344px;top:467px;width:1px;height:20px;background:#d8d8d8;"></div>
<div style="position:absolute;left:446px;top:467px;width:1px;height:20px;background:#d8d8d8;"></div>
<div style="position:absolute;left:545px;top:467px;width:1px;height:20px;background:#d8d8d8;"></div>
<div style="position:absolute;left:634px;top:467px;width:1px;height:20px;background:#d8d8d8;"></div>
<div style="position:absolute;left:717px;top:467px;width:1px;height:20px;background:#d8d8d8;"></div>
<div style="position:absolute;left:863px;top:467px;width:1px;height:20px;background:#d8d8d8;"></div>
<div style="position:absolute;left:939px;top:467px;width:1px;height:20px;background:#d8d8d8;"></div>
<div style="position:absolute;left:1035px;top:467px;width:1px;height:20px;background:#d8d8d8;"></div>
<div style="position:absolute;left:1089px;top:467px;width:1px;height:20px;background:#d8d8d8;"></div>
<div style="position:absolute;left:1141px;top:467px;width:1px;height:20px;background:#d8d8d8;"></div>
<div style="position:absolute;left:41.5px;top:471px;line-height:13px;font-size:11px;color:#24243a;white-space:nowrap;">V</div>
<div style="position:absolute;left:103.5px;top:471px;line-height:13px;font-size:11px;color:#24243a;white-space:nowrap;">02</div>
<div style="position:absolute;left:153.5px;top:471px;line-height:13px;font-size:11px;color:#24243a;white-space:nowrap;">11</div>
<div style="position:absolute;left:259.5px;top:471px;line-height:13px;font-size:11px;color:#24243a;white-space:nowrap;">3</div>
<div style="position:absolute;left:348.5px;top:471px;line-height:13px;font-size:11px;color:#24243a;white-space:nowrap;">FR</div>
<div style="position:absolute;left:450.5px;top:471px;line-height:13px;font-size:11px;color:#24243a;white-space:nowrap;">12</div>
<div style="position:absolute;left:549.5px;top:471px;line-height:13px;font-size:11px;color:#24243a;white-space:nowrap;">DE</div>
<div style="position:absolute;left:638.5px;top:471px;line-height:13px;font-size:11px;color:#24243a;white-space:nowrap;">94016100</div>
<div style="position:absolute;left:721.5px;top:471px;line-height:13px;font-size:11px;color:#24243a;white-space:nowrap;">Sitzmöbel aus Holz</div>
<div style="position:absolute;left:536px;width:400px;top:471px;line-height:13px;font-size:11px;color:#24243a;text-align:right;white-space:nowrap;">9</div>
<div style="position:absolute;left:632px;width:400px;top:471px;line-height:13px;font-size:11px;color:#24243a;text-align:right;white-space:nowrap;">1</div>
<div style="position:absolute;left:686px;width:400px;top:471px;line-height:13px;font-size:11px;color:#24243a;text-align:right;white-space:nowrap;">80 €</div>
<div style="position:absolute;left:738px;width:400px;top:471px;line-height:13px;font-size:11px;color:#24243a;text-align:right;white-space:nowrap;">1</div>
<div style="position:absolute;left:1145.5px;top:471px;line-height:13px;font-size:11px;color:#24243a;white-space:nowrap;">FR98765432111</div>
<div style="position:absolute;left:1238px;top:278px;width:1px;height:210px;background:#d8d8d8;"></div>
<svg style="position:absolute;left:27px;top:285px" width="5" height="8"><path d="M0 0L4 3.75L0 7.5Z" fill="#6a6a6a"/></svg>
<div style="position:absolute;left:19px;top:618px;width:1349px;height:1px;background:#a0a0a0;"></div>
<div style="position:absolute;left:19px;top:619px;width:1349px;height:30px;background:#f0f0f0;"></div>
<div style="position:absolute;left:865px;top:622px;width:72px;height:22px;border:1px solid #a6a6a6;background:#fff;"></div>
<div style="position:absolute;left:535px;width:400px;top:628px;line-height:13px;font-size:11px;color:#24243a;text-align:right;white-space:nowrap;word-spacing:-1px;">557 kg</div>
<div style="position:absolute;left:1037px;top:622px;width:50px;height:22px;border:1px solid #a6a6a6;background:#fff;"></div>
<div style="position:absolute;left:685px;width:400px;top:628px;line-height:13px;font-size:11px;color:#24243a;text-align:right;white-space:nowrap;word-spacing:-1px;">5.342 €</div>
<div style="position:absolute;left:1091px;top:622px;width:48px;height:22px;border:1px solid #a6a6a6;background:#fff;"></div>
<div style="position:absolute;left:737px;width:400px;top:628px;line-height:13px;font-size:11px;color:#24243a;text-align:right;white-space:nowrap;">43</div>
<div style="position:absolute;left:20px;top:655px;line-height:13px;font-size:11px;color:#333;white-space:nowrap;letter-spacing:0.11px;word-spacing:0px;">Hinweise: Ausgewertet werden Rechnungen, Gutschriften, Sammelrechnungen, Schlussrechnungen. Stornierte Belege werden ignoriert.</div>
<div style="position:absolute;left:20px;top:668px;line-height:13px;font-size:11px;color:#333;white-space:nowrap;letter-spacing:0.175px;word-spacing:0px;">Gutschriften werden negativ berücksichtigt. Über das Kontextmenü (rechte Maustaste) des Tabellenkopfes stehen umfangreiche</div>
<div style="position:absolute;left:20px;top:682px;line-height:13px;font-size:11px;color:#333;white-space:nowrap;letter-spacing:0.18px;word-spacing:0px;">Gruppierungs-, Filter- und Sortierfunktionen zur Verfügung. Die Spalten können per Maus verschoben werden.</div>
<div style="position:absolute;left:1343px;top:654px;width:24px;height:41px;border:1px solid #a6a6a6;background:#f0f0f0;"></div>
<svg style="position:absolute;left:1348px;top:667px" width="13" height="16" viewBox="0 0 13 16">
<path d="M0 1 Q0 0 1 0 H2 V13.3 H12.2 V15 H1.2 Q0 15 0 13.8Z" fill="#3f7abf"/>
<rect x="3" y="0" width="9.2" height="12.6" fill="#3f7abf"/>
<path d="M5.7 4.6 Q5.7 2.6 7.7 2.6 Q9.7 2.6 9.7 4.4 Q9.7 5.5 8.7 6.1 Q7.8 6.6 7.8 7.8" stroke="#fff" stroke-width="1.6" fill="none"/>
<rect x="6.9" y="9" width="1.8" height="1.8" fill="#fff"/>
</svg>
</body></html>
